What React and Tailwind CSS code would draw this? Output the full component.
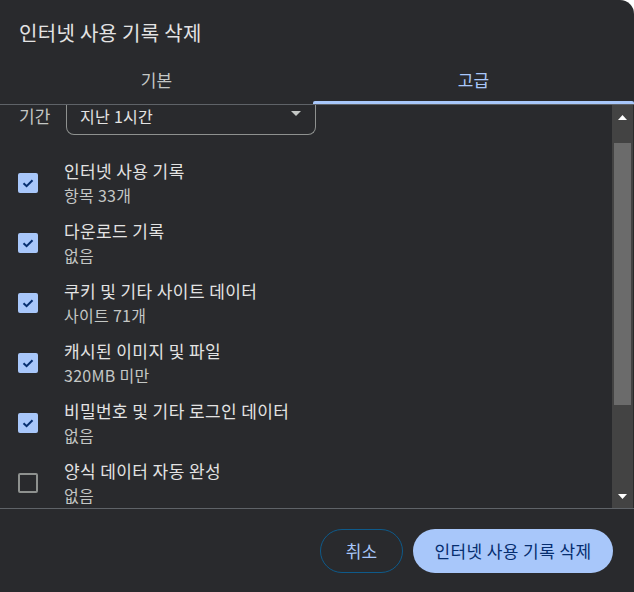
import React from "react";

const items = [
  { title: "인터넷 사용 기록", sub: "항목 33개", checked: true },
  { title: "다운로드 기록", sub: "없음", checked: true },
  { title: "쿠키 및 기타 사이트 데이터", sub: "사이트 71개", checked: true },
  { title: "캐시된 이미지 및 파일", sub: "320MB 미만", checked: true },
  { title: "비밀번호 및 기타 로그인 데이터", sub: "없음", checked: true },
  { title: "양식 데이터 자동 완성", sub: "없음", checked: false },
];

function Checkbox({ checked }) {
  if (!checked) {
    return <div className="w-[20px] h-[20px] rounded-[2px] border-2 border-[#8e918f] shrink-0" />;
  }
  return (
    <div className="w-[20px] h-[20px] rounded-[2px] bg-[#a8c7fa] shrink-0 flex items-center justify-center">
      <svg width="20" height="20" viewBox="0 0 20 20">
        <polyline points="5.5,10.2 8.6,13.2 14.5,7.3" fill="none" stroke="#062e6f" strokeWidth="2" />
      </svg>
    </div>
  );
}

export default function App() {
  return (
    <div
      className="w-[634px] h-[592px] bg-[#292a2d] rounded-tr-[14px] flex flex-col overflow-hidden text-[#e3e3e3]"
      style={{ fontFamily: '"Noto Sans CJK KR", "Noto Sans", sans-serif' }}
    >
      <div className="h-[56px] pl-[19px] pt-[20px] text-[20px] leading-[26px] tracking-[0.3px] text-[#e3e3e3]">
        인터넷 사용 기록 삭제
      </div>
      <div className="flex border-b border-[#5f6368]">
        <div className="relative w-[313px] h-[48px] flex items-center justify-center text-[17px] text-[#c4c7c5]">
          기본
        </div>
        <div className="relative flex-1 h-[48px] flex items-center justify-center text-[17px] text-[#a8c7fa]">
          고급
          <div className="absolute left-0 right-0 bottom-0 h-[3px] bg-[#a8c7fa] rounded-t-[2px]" />
        </div>
      </div>
      <div className="h-[403px] flex">
        <div className="flex-1">
          <div className="flex h-[30px] pl-[19px]">
            <span className="shrink-0 text-[17px] leading-[22px] text-[#c4c7c5] w-[47px]">기간</span>
            <div className="w-[250px] h-[30px] border-x border-b border-[#8e918f] rounded-b-[8px] flex items-start justify-between pl-[13px] pr-[14px]">
              <span className="text-[16px] leading-[22px] tracking-[0.3px] text-[#e3e3e3]">지난 1시간</span>
              <svg className="mt-[6px]" width="10" height="5" viewBox="0 0 10 5">
                <polygon points="0,0 10,0 5,5" fill="#c4c7c5" />
              </svg>
            </div>
          </div>
          <div className="mt-[24px] flex flex-col gap-[12px]">
            {items.map((it) => (
              <div key={it.title} className="flex items-center pl-[18px] h-[48px]">
                <Checkbox checked={it.checked} />
                <div className="ml-[26px] flex flex-col">
                  <span className="text-[17px] leading-[24px] tracking-[0.4px] text-[#e3e3e3]">{it.title}</span>
                  <span className="text-[16px] leading-[24px] tracking-[0.3px] text-[#c4c7c5]">{it.sub}</span>
                </div>
              </div>
            ))}
          </div>
        </div>
        <div className="w-[21px] bg-[#434343] flex flex-col items-center">
          <div className="h-[24px] flex items-center justify-center">
            <svg width="9" height="5" viewBox="0 0 9 5">
              <polygon points="4.5,0 9,5 0,5" fill="#ffffff" />
            </svg>
          </div>
          <div className="mt-[14px] w-[17px] h-[262px] bg-[#6b6b6b]" />
          <div className="flex-1" />
          <div className="h-[24px] flex items-center justify-center">
            <svg width="9" height="5" viewBox="0 0 9 5">
              <polygon points="0,0 9,0 4.5,5" fill="#ffffff" />
            </svg>
          </div>
        </div>
        <div className="w-[1px] bg-[#2a2a2a]" />
      </div>
      <div className="flex-1 border-t border-[#5f6368] flex items-center justify-end gap-[10px] pr-[21px]">
        <button className="w-[83px] h-[44px] rounded-full border border-[#0e5a8a] text-[17px] text-[#a8c7fa]">
          취소
        </button>
        <button className="w-[200px] h-[44px] rounded-full bg-[#a8c7fa] text-[17px] tracking-[0.4px] text-[#062e6f]">
          인터넷 사용 기록 삭제
        </button>
      </div>
    </div>
  );
}
